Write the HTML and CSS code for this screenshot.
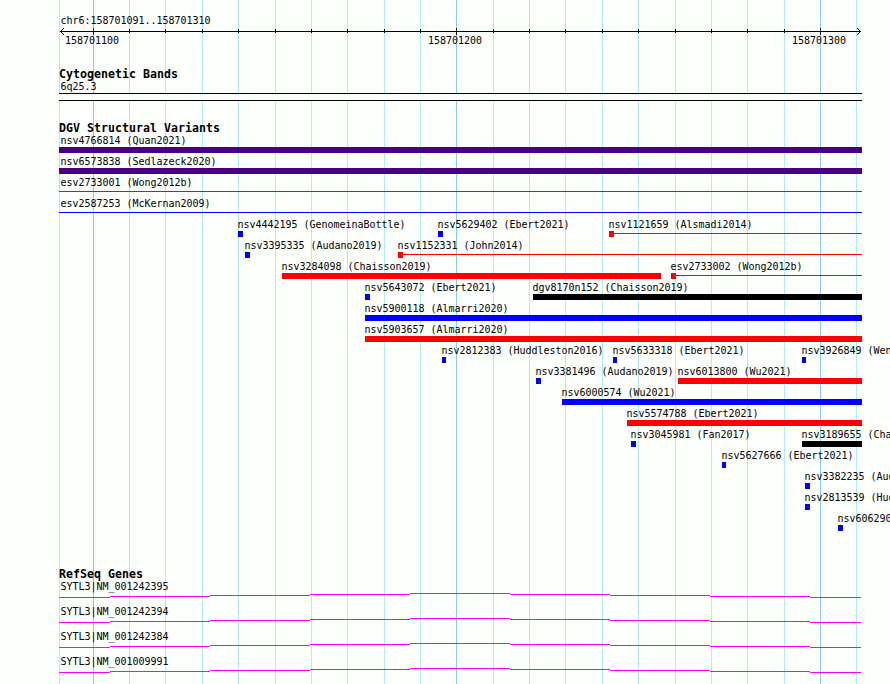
FILE: index.html
```
<!DOCTYPE html>
<html lang="en">
<head>
  <meta charset="UTF-8">
  <title>chr6:158701091..158701310</title>
  <link rel="stylesheet" href="styles.css">
</head>
<body>
  <main class="panel">
    <svg class="gridlines" width="831" height="684" shape-rendering="crispEdges">
      <path class="minor" d="M.5 0v684M70.5 0v684M106.5 0v684M143.5 0v684M179.5 0v684M216.5 0v684M252.5 0v684M288.5 0v684M325.5 0v684M361.5 0v684M434.5 0v684M470.5 0v684M506.5 0v684M543.5 0v684M579.5 0v684M616.5 0v684M652.5 0v684M688.5 0v684M725.5 0v684M797.5 0v684"/>
      <path class="major" d="M34.5 0v684M397.5 0v684M761.5 0v684"/>
    </svg>

    <header class="ruler">
      <p class="region">chr6:158701091..158701310</p>
      <svg class="axis" width="831" height="8" shape-rendering="crispEdges">
        <path d="M1 4.5h801"/>
        <path d="M34.5 1v7M397.5 1v7M761.5 1v7"/>
        <path d="M70.5 2v4M106.5 2v4M143.5 2v4M179.5 2v4M216.5 2v4M252.5 2v4M288.5 2v4M325.5 2v4M361.5 2v4M434.5 2v4M470.5 2v4M506.5 2v4M543.5 2v4M579.5 2v4M616.5 2v4M652.5 2v4M688.5 2v4M725.5 2v4"/>
        <path d="M2 3.5h1M3 2.5h1M4 1.5h1M2 5.5h1M3 6.5h1M4 7.5h1"/>
        <path d="M800 3.5h1M799 2.5h1M798 1.5h1M800 5.5h1M799 6.5h1M798 7.5h1"/>
      </svg>
      <div class="ticks">
        <span style="--x: 6px">158701100</span>
        <span style="--x: 369px">158701200</span>
        <span style="--x: 733px">158701300</span>
      </div>
    </header>

    <section class="track cytobands">
      <h2>Cytogenetic Bands</h2>
      <p class="label">6q25.3</p>
      <div class="band"></div>
    </section>

    <section class="track variants">
      <h2>DGV Structural Variants</h2>
      <div class="row">
        <div class="feature full purple"><span>nsv4766814 (Quan2021)</span><i class="bar"></i></div>
      </div>
      <div class="row">
        <div class="feature full purple"><span>nsv6573838 (Sedlazeck2020)</span><i class="bar"></i></div>
      </div>
      <div class="row">
        <div class="feature full red"><span>esv2733001 (Wong2012b)</span><i class="line"></i></div>
      </div>
      <div class="row">
        <div class="feature full blue"><span>esv2587253 (McKernan2009)</span><i class="line"></i></div>
      </div>
      <div class="row">
        <div class="feature blue" style="--x: 179px; --w: 5px"><span>nsv4442195 (GenomeinaBottle)</span><i class="bar"></i></div>
        <div class="feature blue" style="--x: 379px; --w: 5px"><span>nsv5629402 (Ebert2021)</span><i class="bar"></i></div>
        <div class="feature red" style="--x: 550px; --w: 253px"><span>nsv1121659 (Alsmadi2014)</span><i class="line start"></i></div>
      </div>
      <div class="row">
        <div class="feature blue" style="--x: 186px; --w: 5px"><span>nsv3395335 (Audano2019)</span><i class="bar"></i></div>
        <div class="feature red" style="--x: 339px; --w: 464px"><span>nsv1152331 (John2014)</span><i class="line start"></i></div>
      </div>
      <div class="row">
        <div class="feature red" style="--x: 223px; --w: 379px"><span>nsv3284098 (Chaisson2019)</span><i class="bar"></i></div>
        <div class="feature red" style="--x: 612px; --w: 191px"><span>esv2733002 (Wong2012b)</span><i class="line start"></i></div>
      </div>
      <div class="row">
        <div class="feature blue" style="--x: 306px; --w: 5px"><span>nsv5643072 (Ebert2021)</span><i class="bar"></i></div>
        <div class="feature black" style="--x: 474px; --w: 329px"><span>dgv8170n152 (Chaisson2019)</span><i class="bar"></i></div>
      </div>
      <div class="row">
        <div class="feature blue" style="--x: 306px; --w: 497px"><span>nsv5900118 (Almarri2020)</span><i class="bar"></i></div>
      </div>
      <div class="row">
        <div class="feature red" style="--x: 306px; --w: 497px"><span>nsv5903657 (Almarri2020)</span><i class="bar"></i></div>
      </div>
      <div class="row">
        <div class="feature blue" style="--x: 383px; --w: 4px"><span>nsv2812383 (Huddleston2016)</span><i class="bar"></i></div>
        <div class="feature blue" style="--x: 554px; --w: 4px"><span>nsv5633318 (Ebert2021)</span><i class="bar"></i></div>
        <div class="feature blue" style="--x: 743px; --w: 4px"><span>nsv3926849 (Wenger2019)</span><i class="bar"></i></div>
      </div>
      <div class="row">
        <div class="feature blue" style="--x: 477px; --w: 5px"><span>nsv3381496 (Audano2019)</span><i class="bar"></i></div>
        <div class="feature red" style="--x: 619px; --w: 184px"><span>nsv6013800 (Wu2021)</span><i class="bar"></i></div>
      </div>
      <div class="row">
        <div class="feature blue" style="--x: 503px; --w: 300px"><span>nsv6000574 (Wu2021)</span><i class="bar"></i></div>
      </div>
      <div class="row">
        <div class="feature red" style="--x: 568px; --w: 235px"><span>nsv5574788 (Ebert2021)</span><i class="bar"></i></div>
      </div>
      <div class="row">
        <div class="feature blue" style="--x: 572px; --w: 5px"><span>nsv3045981 (Fan2017)</span><i class="bar"></i></div>
        <div class="feature black" style="--x: 743px; --w: 60px"><span>nsv3189655 (Chaisson2019)</span><i class="bar"></i></div>
      </div>
      <div class="row">
        <div class="feature blue" style="--x: 663px; --w: 4px"><span>nsv5627666 (Ebert2021)</span><i class="bar"></i></div>
      </div>
      <div class="row">
        <div class="feature blue" style="--x: 746px; --w: 5px"><span>nsv3382235 (Audano2019)</span><i class="bar"></i></div>
      </div>
      <div class="row">
        <div class="feature blue" style="--x: 746px; --w: 5px"><span>nsv2813539 (Huddleston2016)</span><i class="bar"></i></div>
      </div>
      <div class="row">
        <div class="feature blue" style="--x: 779px; --w: 5px"><span>nsv606290</span><i class="bar"></i></div>
      </div>
    </section>

    <section class="track genes">
      <h2>RefSeq Genes</h2>
      <div class="gene">
        <p class="label">SYTL3|NM_001242395</p>
        <svg class="intron" width="802" height="5" shape-rendering="crispEdges"><path id="intron" d="M0 4.5h51M51 3.5h100M151 2.5h100M251 1.5h100M351 .5h100M451 1.5h100M551 2.5h100M651 3.5h100M751 4.5h51"/></svg>
      </div>
      <div class="gene">
        <p class="label">SYTL3|NM_001242394</p>
        <svg class="intron" width="802" height="5" shape-rendering="crispEdges"><use href="#intron"/></svg>
      </div>
      <div class="gene">
        <p class="label">SYTL3|NM_001242384</p>
        <svg class="intron" width="802" height="5" shape-rendering="crispEdges"><use href="#intron"/></svg>
      </div>
      <div class="gene">
        <p class="label">SYTL3|NM_001009991</p>
        <svg class="intron" width="802" height="5" shape-rendering="crispEdges"><use href="#intron"/></svg>
      </div>
    </section>
  </main>
</body>
</html>
```
FILE: styles.css
```
body {
  margin: 0;
  background: #fdfffc;
  color: #000;
  font: 10px/12px "DejaVu Sans Mono", monospace;
  letter-spacing: -0.02px;
  overflow: hidden;
}

h2,
p {
  margin: 0;
}

h2 {
  height: 12px;
  font-size: 11.6px;
  line-height: 10px;
  font-weight: bold;
  letter-spacing: 0.017px;
}

svg {
  display: block;
  fill: none;
}

.panel {
  position: relative;
  box-sizing: border-box;
  height: 684px;
  margin-left: 59px;
  padding-top: 15px;
  overflow: hidden;
  white-space: nowrap;
}

/* grid lines run behind every track */
.gridlines {
  position: absolute;
  top: 0;
  left: 0;
  z-index: -1;
}

.minor {
  stroke: #afeeee;
}

.major {
  stroke: #87ceeb;
}

/* ruler */
.region,
.label {
  height: 12px;
  padding-left: 1.5px;
}

.axis {
  stroke: #000;
}

.ticks {
  display: grid;
  height: 12px;
}

.ticks span {
  grid-area: 1 / 1;
  margin-left: var(--x);
}

/* tracks */
.cytobands {
  margin-top: 22px;
}

.band {
  box-sizing: border-box;
  width: 803px;
  height: 8px;
  border: solid #000;
  border-width: 1px 0;
  background: #fdfffc;
}

.variants {
  margin-top: 22px;
}

.row {
  display: grid;
  grid-template-columns: 100%;
  height: 21px;
}

.feature {
  grid-area: 1 / 1;
  width: var(--w);
  margin-left: var(--x);
}

.feature span {
  display: block;
  height: 12px;
  margin-left: -0.5px;
}

.full {
  --x: 0;
  --w: 803px;
}

.feature.full span {
  margin-left: 1.5px;
}

.bar {
  display: block;
  height: 6px;
  background: currentColor;
}

.line {
  display: block;
  height: 6px;
  background: linear-gradient(currentColor, currentColor) 0 2px / 100% 1px no-repeat;
}

.line.start {
  background:
    linear-gradient(currentColor, currentColor) 0 0 / 5px 6px no-repeat,
    linear-gradient(currentColor, currentColor) 0 2px / 100% 1px no-repeat;
}

.purple i {
  color: #4b0082;
}

.red i {
  color: #f00;
}

.blue i {
  color: #00f;
}

.black i {
  color: #000;
}

.genes {
  margin-top: 35px;
}

.gene {
  height: 25px;
}

.intron {
  stroke: #f0f;
}
```
